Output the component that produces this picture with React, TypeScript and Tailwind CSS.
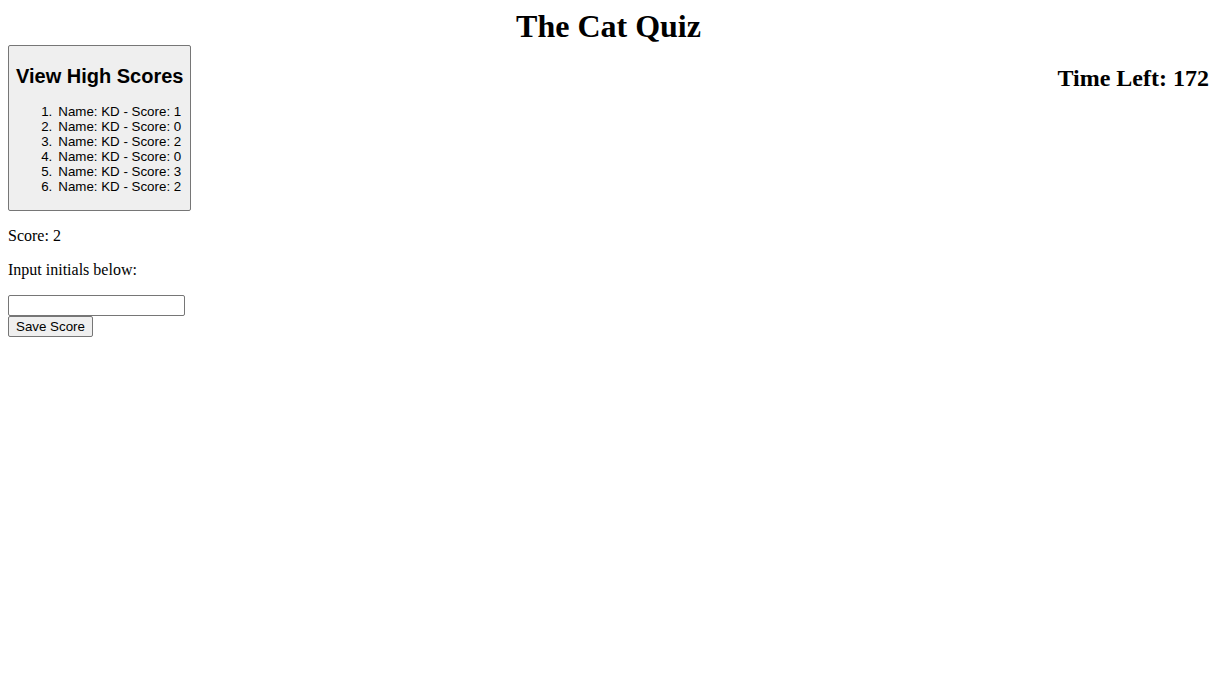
const SCORES = [1, 0, 2, 0, 3, 2];

export default function App() {
  return (
    <div className="min-h-screen bg-white p-2 text-black font-['Liberation_Serif',serif]">
      <h1 className="text-center text-[32px] font-bold leading-[normal]">The Cat Quiz</h1>

      <div className="flex items-start justify-between">
        <button className="rounded-[2px] border border-[#767676] bg-[#efefef] px-[7px] py-[2px] text-center text-[13.333px] leading-[normal] font-['Liberation_Sans',Arial,sans-serif]">
          <h2 className="my-[16.6px] text-[20px] font-bold leading-[normal]">View High Scores</h2>
          <ol className="mb-[13.33px] list-outside list-decimal pl-10">
            {SCORES.map((s, i) => (
              <li key={i}>Name: KD - Score: {s}</li>
            ))}
          </ol>
        </button>
        <h2 className="mt-[19.92px] text-[24px] font-bold leading-[normal]">Time Left: 172</h2>
      </div>

      <p className="my-4 text-base leading-[normal]">Score: 2</p>
      <p className="my-4 text-base leading-[normal]">Input initials below:</p>

      <div className="flex flex-col items-start">
        <input
          type="text"
          className="h-[21px] w-[177px] rounded-[2px] border border-[#767676] bg-white px-[3px] text-[13.333px] font-['Liberation_Sans',Arial,sans-serif] outline-none"
        />
        <button className="rounded-[2px] border border-[#767676] bg-[#efefef] px-[7px] py-[2px] text-[13.333px] leading-[normal] font-['Liberation_Sans',Arial,sans-serif]">
          Save Score
        </button>
      </div>
    </div>
  );
}
